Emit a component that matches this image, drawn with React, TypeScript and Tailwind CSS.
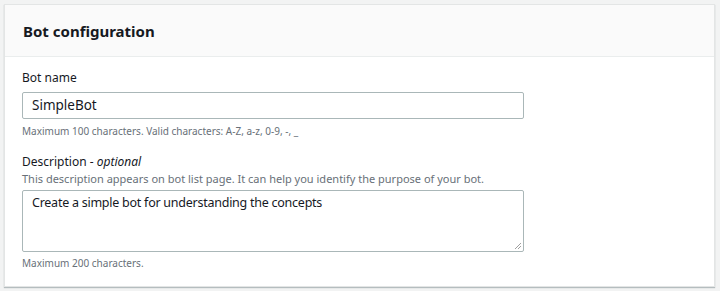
export default function App() {
  return (
    <div className="w-[720px] h-[291px] bg-[#f2f3f3] pt-[4px] pl-[4px]" style={{ fontFamily: '"Noto Sans", "Open Sans", Arial, sans-serif' }}>
      <div className="w-[711px] h-[283px] bg-white border border-[#e3e5e5] shadow-[0_1px_1px_rgba(0,28,36,0.25)] flex flex-col">
        <div className="h-[52px] bg-[#fafafa] border-b border-[#eaeded] flex items-center pl-[18px]">
          <h2 className="text-[15px] font-bold text-[#16191f] leading-[20px]">Bot configuration</h2>
        </div>
        <div className="pl-[17px] pt-[13px] flex flex-col">
          <label className="text-[12px] text-[#16191f] leading-[16px]">Bot name</label>
          <div className="mt-[6px] w-[502px] h-[27px] border border-[#aab7b8] rounded-[2px] flex items-center pl-[9px] text-[13.5px] text-[#16191f]">SimpleBot</div>
          <div className="mt-[5px] text-[10px] text-[#687078] leading-[14px]">Maximum 100 characters. Valid characters: A-Z, a-z, 0-9, -, _</div>
          <div className="mt-[16px] text-[12px] text-[#16191f] leading-[16px]">Description - <i>optional</i></div>
          <div className="mt-[2px] text-[11px] text-[#687078] leading-[14px]">This description appears on bot list page. It can help you identify the purpose of your bot.</div>
          <div className="relative mt-[4px] w-[502px] h-[62px] border border-[#aab7b8] rounded-[2px] pl-[9px] pt-[3px] text-[12.5px] leading-[18px] tracking-[-0.25px] text-[#16191f]">
            Create a simple bot for understanding the concepts
            <svg className="absolute right-[1px] bottom-[1px]" width="8" height="8" viewBox="0 0 8 8">
              <line x1="7" y1="1" x2="1" y2="7" stroke="#888" strokeWidth="0.8" />
              <line x1="7" y1="4" x2="4" y2="7" stroke="#888" strokeWidth="0.8" />
            </svg>
          </div>
          <div className="mt-[4px] text-[10px] text-[#687078] leading-[14px]">Maximum 200 characters.</div>
        </div>
      </div>
    </div>
  );
}
